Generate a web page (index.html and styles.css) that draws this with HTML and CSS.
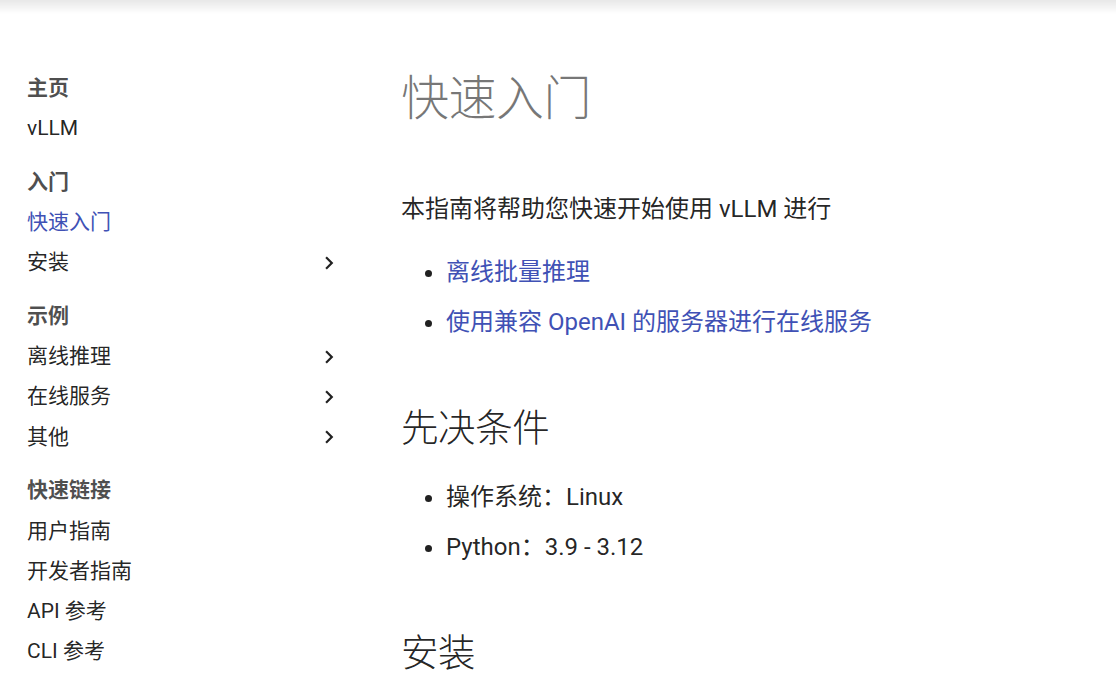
FILE: index.html
```html
<!DOCTYPE html>
<html lang="zh-CN">
<head>
<meta charset="utf-8">
<title>快速入门 - vLLM</title>
<link rel="stylesheet" href="styles.css">
</head>
<body>
<div class="topshade"></div>
<div class="page">
  <nav class="sidebar">
    <div class="sec-title first">主页</div>
    <a class="nav-link">vLLM</a>

    <div class="sec-title">入门</div>
    <a class="nav-link active">快速入门</a>
    <a class="nav-link has-sub">安装<svg class="chev" viewBox="0 0 24 24"><path d="M8.59 16.58 13.17 12 8.59 7.41 10 6l6 6-6 6-1.41-1.42Z"/></svg></a>

    <div class="sec-title">示例</div>
    <a class="nav-link has-sub">离线推理<svg class="chev" viewBox="0 0 24 24"><path d="M8.59 16.58 13.17 12 8.59 7.41 10 6l6 6-6 6-1.41-1.42Z"/></svg></a>
    <a class="nav-link has-sub">在线服务<svg class="chev" viewBox="0 0 24 24"><path d="M8.59 16.58 13.17 12 8.59 7.41 10 6l6 6-6 6-1.41-1.42Z"/></svg></a>
    <a class="nav-link has-sub">其他<svg class="chev" viewBox="0 0 24 24"><path d="M8.59 16.58 13.17 12 8.59 7.41 10 6l6 6-6 6-1.41-1.42Z"/></svg></a>

    <div class="sec-title">快速链接</div>
    <a class="nav-link">用户指南</a>
    <a class="nav-link">开发者指南</a>
    <a class="nav-link">API 参考</a>
    <a class="nav-link">CLI 参考</a>
  </nav>

  <main class="content">
    <h1>快速入门</h1>
    <p>本指南将帮助您快速开始使用 vLLM 进行</p>
    <ul>
      <li><a class="link">离线批量推理</a></li>
      <li><a class="link">使用兼容 OpenAI 的服务器进行在线服务</a></li>
    </ul>

    <h2>先决条件</h2>
    <ul>
      <li>操作系统：Linux</li>
      <li>Python：3.9 - 3.12</li>
    </ul>

    <h2>安装</h2>
  </main>
</div>
</body>
</html>
```

FILE: styles.css
```css
html, body {
  margin: 0;
  padding: 0;
  background: #ffffff;
}

body {
  font-family: Roboto, "Noto Sans CJK SC", "Noto Sans", sans-serif;
  color: rgba(0, 0, 0, 0.87);
  height: 684px;
  overflow: hidden;
}

.topshade {
  position: fixed;
  top: 0;
  left: 0;
  right: 0;
  height: 14px;
  background: linear-gradient(rgba(0, 0, 0, 0.09), rgba(0, 0, 0, 0));
}

.page {
  display: flex;
  padding-left: 27px;
}

.sidebar {
  width: 315px;
  flex: none;
  padding-top: 75px;
  font-size: 21px;
  line-height: 1.3;
}

.sec-title {
  font-weight: 700;
  color: rgba(0, 0, 0, 0.7);
  margin-top: 26.2px;
}

.sec-title.first {
  margin-top: 0;
}

.nav-link {
  display: flex;
  align-items: center;
  justify-content: space-between;
  height: 27.3px;
  margin-top: 13px;
  color: rgba(0, 0, 0, 0.87);
  text-decoration: none;
}

.nav-link.active {
  color: #4051b5;
}

.chev {
  width: 26px;
  height: 26px;
  margin: -2px 0 -2px;
  fill: rgba(0, 0, 0, 0.87);
  flex: none;
}

.content {
  margin-left: 59px;
  padding-top: 68px;
  font-size: 24px;
  line-height: 1.6;
}

.content h1 {
  margin: 0 0 60px;
  font-size: 48px;
  font-weight: 300;
  line-height: 1.3;
  letter-spacing: -0.01em;
  color: rgba(0, 0, 0, 0.54);
}

.content h2 {
  margin: 60px 0 24px;
  font-size: 37.5px;
  font-weight: 300;
  line-height: 1.4;
  letter-spacing: -0.01em;
  color: rgba(0, 0, 0, 0.87);
}

.content p {
  margin: 24px 0;
}

.content ul {
  margin: 24px 0;
  padding: 0 0 0 45px;
}

.content li {
  margin-bottom: 12px;
}

.link {
  color: #4051b5;
  text-decoration: none;
}
```
